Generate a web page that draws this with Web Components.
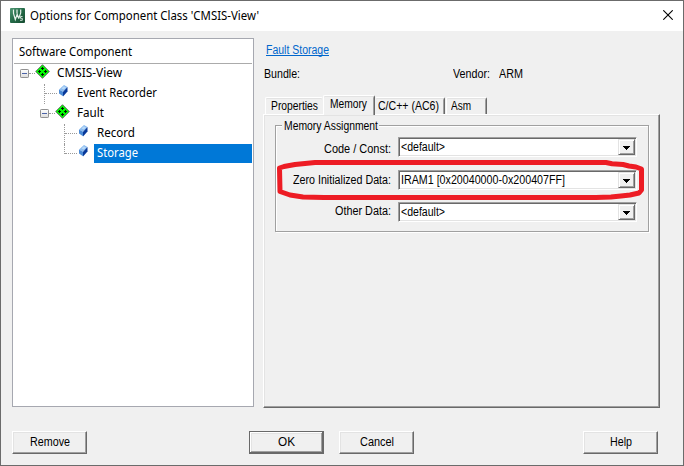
<!DOCTYPE html>
<html lang="en"><head><meta charset="utf-8"><title>Options for Component Class</title>
<style>html,body{margin:0;width:684px;height:466px;overflow:hidden;background:#f0f0f0}</style></head>
<body><options-dialog></options-dialog>
<script>
const define = (name, html, ready) => customElements.define(name, class extends HTMLElement {
  constructor() { super(); this.attachShadow({mode:'open'}).innerHTML = html; }
  connectedCallback() { if (ready) ready.call(this, this.shadowRoot); }
});

// Label condensed or widened to the width given in "w".
define('fit-text', `<style>:host{display:block;white-space:nowrap;flex:none}span{display:inline-block;transform-origin:0 0}</style><span><slot></slot></span>`, function(r) {
  const w = +this.getAttribute('w'), s = r.querySelector('span');
  this.style.width = w + 'px';
  const n = s.getBoundingClientRect().width;
  if (n) s.style.transform = `scaleX(${w / n})`;
});

define('push-button', `<style>
:host{display:flex;box-sizing:border-box;width:75px;height:23px;justify-content:center;padding-top:3px;border:1px solid;border-color:#fff #696969 #696969 #fff;box-shadow:inset -1px -1px #a0a0a0,inset 1px 1px #e3e3e3}
:host([primary]){border-color:#696969;box-shadow:inset -1px -1px #696969,inset 1px 1px #fff,inset -2px -2px #a0a0a0,inset 2px 2px #e3e3e3}
</style><slot></slot>`);

define('combo-box', `<style>
:host{display:flex;box-sizing:border-box;width:239px;height:20px;background:#fff;border:1px solid;border-color:#a0a0a0 #fff #fff #a0a0a0;box-shadow:inset 1px 1px #696969,inset -1px -1px #e3e3e3;padding:1px;justify-content:space-between}
.t{padding:1px 0 0 1px}
.b{box-sizing:border-box;width:17px;height:16px;background:#f0f0f0;border:1px solid;border-color:#e3e3e3 #696969 #696969 #e3e3e3;box-shadow:inset 1px 1px #fff,inset -1px -1px #a0a0a0}
svg{display:block}
</style><div class="t"><slot></slot></div><div class="b"><svg width="15" height="14" shape-rendering="crispEdges"><path d="M4 6h7v1h-1v1h-1v1h-1v1h-1v-1h-1v-1h-1v-1h-1z"/></svg></div>`);

define('tab-item', `<style>
:host{display:block;box-sizing:border-box;height:17px;border-top:1px solid #fff;border-left:1px solid #fff;border-right:1px solid #696969;border-radius:2px 2px 0 0;box-shadow:inset 0 1px #e3e3e3,inset -1px 0 #a0a0a0;padding:1px 0 0 4px}
:host([plain]){border-right-color:#f0f0f0;box-shadow:inset 0 1px #e3e3e3}
:host([active]){height:20px;margin-bottom:-1px;background:#f0f0f0;padding:1px 0 0 6px;position:relative}
</style><slot></slot>`);

define('tree-icon', `<style>:host{display:block;flex:none}svg{display:block}</style><div></div>`, function(r) {
  const svg = {
    diamond: `<svg width="15" height="15"><path d="M7.5 .7 14.3 7.5 7.5 14.3.7 7.5z" fill="#0f0" stroke="#6a6a6a" stroke-width="1"/><g fill="#001c00" shape-rendering="crispEdges"><path d="M7 3h1v1h1v1h-1v1h-1v-1h-1v-1h1zM4 6h1v1h1v1h-1v1h-1v-1h-1v-1h1zM10 6h1v1h1v1h-1v1h-1v-1h-1v-1h1zM7 9h1v1h1v1h-1v1h-1v-1h-1v-1h1z"/></g></svg>`,
    cube: `<svg width="9" height="12"><path d="M5 0 8.5 2 4 6.8 0 4.5z" fill="#8cbcf0"/><path d="M0 4.5 4 6.8V11.3L0 8.5z" fill="#4b8bd6"/><path d="M8.5 2V6.5L4 11.5V6.8z" fill="#07399a"/><path d="M4.8 1.2 7 2.4 5 4.6 2.5 3.5z" fill="#b9daf8"/></svg>`,
    minus: `<svg width="9" height="9"><defs><linearGradient id="g" x2="0" y2="1"><stop stop-color="#fff"/><stop offset="1" stop-color="#dcdcdc"/></linearGradient></defs><rect x=".5" y=".5" width="8" height="8" rx=".7" fill="url(#g)" stroke="#919191"/><path d="M2 4.5h5" stroke="#4b63a7"/></svg>`
  };
  r.querySelector('div').innerHTML = svg[this.getAttribute('kind')];
});

define('component-tree', `<style>
:host{display:block;box-sizing:border-box;width:242px;height:369px;background:#fff;border:1px solid #a6a8b0;padding:0 1px;font:12px/16px "Noto Sans","Open Sans",sans-serif;color:#000}
.head{height:24px;border-bottom:1px solid #ababab;padding-left:5px}
.head fit-text{padding-top:5px}
.row{display:grid;height:20px;align-items:start;justify-content:start}
.top{grid-template-columns:9px 6px 15px 200px}
.h{height:0;margin-top:9px;border-top:1px dotted #9a9a9a}
.row fit-text{padding-top:1px}
.leaf{grid-template-columns:13px 10px 210px}
.v{height:100%;border-left:1px dotted #9a9a9a}
.half{height:10px}
.sel{background:#0078d7;color:#fff;height:19px;padding-left:3px}
</style>
<div class="head"><fit-text w="113">Software Component</fit-text></div>
<div class="row top" style="padding-left:6px"><tree-icon kind="minus" style="margin-top:5px"></tree-icon><div class="h"></div><tree-icon kind="diamond"></tree-icon><fit-text w="65" style="margin-left:7px">CMSIS-View</fit-text></div>
<div class="row leaf" style="padding-left:30px"><div class="v"><div class="h"></div></div><tree-icon kind="cube" style="margin:1px 0 0 2px"></tree-icon><fit-text w="80" style="margin-left:10px">Event Recorder</fit-text></div>
<div class="row top" style="padding-left:26px"><tree-icon kind="minus" style="margin-top:5px"></tree-icon><div class="h"></div><tree-icon kind="diamond"></tree-icon><fit-text w="27" style="margin-left:7px">Fault</fit-text></div>
<div class="row leaf" style="padding-left:50px"><div class="v"><div class="h"></div></div><tree-icon kind="cube" style="margin:1px 0 0 2px"></tree-icon><fit-text w="38" style="margin-left:10px">Record</fit-text></div>
<div class="row leaf" style="padding-left:50px;grid-template-columns:13px 10px 165px"><div class="v half"><div class="h"></div></div><tree-icon kind="cube" style="margin:1px 0 0 2px"></tree-icon><div class="sel" style="margin-left:7px;width:155px"><fit-text w="41">Storage</fit-text></div></div>`);

define('group-box', `<style>
:host{display:block}
.frame{border:1px solid #a0a0a0;box-sizing:border-box;width:374px;height:107px;box-shadow:inset 1px 1px #fff,1px 1px #fff}
.cap{background:#f0f0f0;width:97px;box-sizing:border-box;height:14px;margin:-7px 0 0 6px;padding-left:2px}
.body{padding-top:4px}
</style><div class="frame"><div class="cap"><fit-text w="94">Memory Assignment</fit-text></div><div class="body"><slot></slot></div></div>`);

define('red-outline', `<style>:host{position:absolute;left:276px;top:158px;pointer-events:none}svg{display:block}</style>
<svg width="372" height="46" viewBox="276 158 372 46"><path d="M279.5 168 284 166.5 295 164.5 315 162.5H606L612 163.7 623 164.5 629 166 636 167 641.5 169V190L639 193 630 195 621 196 611 197 596 197.5H324L303 197 290 195 280 191.5Z" fill="none" stroke="#ed1c24" stroke-width="5" stroke-linejoin="round"/></svg>`);

define('options-dialog', `<style>
:host{display:block;box-sizing:border-box;width:684px;height:466px;border:1px solid #6b6b6b;background:#f0f0f0;font:12px/14px "Liberation Sans",Arial,sans-serif;color:#000}
header{display:flex;height:30px;background:#fff}
header fit-text{font:12px/16px "Noto Sans","Open Sans",sans-serif;margin:7px 0 0 5px}
.logo{margin:7px 0 0 9px}.x{margin:9px 10px 0 auto}
svg{display:block}
main{display:flex;padding:7px 0 0 11px;height:369px}
.right{width:398px;margin-left:9px}
.link{margin:5px 0 0 3px;color:#0066cc;width:63px;height:12px;border-bottom:1px solid #0066cc}
.info{display:flex;height:14px;margin:11px 0 0 1px}
.tabs{display:flex;align-items:flex-end;height:19px;margin:14px 0 0 2px}
.page{box-sizing:border-box;width:397px;height:294px;border:1px solid;border-color:#fff #696969 #696969 #fff;box-shadow:inset -1px -1px #a0a0a0,inset 1px 1px #e3e3e3;padding:10px 0 0 11px}
.field{display:grid;grid-template-columns:115px 239px;column-gap:7px;height:20px}
.field>fit-text{justify-self:end}
footer{display:flex;padding:24px 0 0 11px}
</style>
<header><svg class="logo" width="15" height="15"><defs><linearGradient id="k" x2="1" y2="1"><stop stop-color="#4f9673"/><stop offset=".5" stop-color="#236a47"/><stop offset="1" stop-color="#164c31"/></linearGradient></defs><rect width="15" height="15" rx="1" fill="url(#k)"/><path d="M3.5 1.5V5.5L5.3 11.5 7.2 6.2 8.7 10.5M7 1.5V5.5M10.7 1.5V5L8.7 10.5" fill="none" stroke="#e8f2ec" stroke-width="1.2"/><path d="M12.5 8.5H10.5V10.3H12.3V12.3H10" fill="none" stroke="#dcebe2" stroke-width=".9"/></svg><fit-text w="229">Options for Component Class 'CMSIS-View'</fit-text><svg class="x" width="10" height="10"><path d="M.3.3 9.7 9.7M9.7.3.3 9.7" stroke="#000" stroke-width="1.1"/></svg></header>
<main><component-tree></component-tree>
<div class="right"><div class="link"><fit-text w="63">Fault Storage</fit-text></div>
<div class="info"><fit-text w="36">Bundle:</fit-text><fit-text w="37" style="margin-left:153px">Vendor:</fit-text><fit-text w="24" style="margin-left:9px">ARM</fit-text></div>
<div class="tabs"><tab-item plain style="width:58px;padding-left:5px"><fit-text w="47">Properties</fit-text></tab-item><tab-item active style="width:52px"><fit-text w="37">Memory</fit-text></tab-item><tab-item style="width:70px;padding-left:2px;border-left-color:#f0f0f0"><fit-text w="61">C/C++ (AC6)</fit-text></tab-item><tab-item style="width:41px;margin-left:1px"><fit-text w="20">Asm</fit-text></tab-item></div>
<div class="page"><group-box>
<div class="field"><fit-text w="67" style="margin-top:5px">Code / Const:</fit-text><combo-box><fit-text w="44">&lt;default&gt;</fit-text></combo-box></div>
<div class="field" style="margin-top:13px"><fit-text w="98" style="margin-top:3px">Zero Initialized Data:</fit-text><combo-box><fit-text w="164">IRAM1 [0x20040000-0x200407FF]</fit-text></combo-box></div>
<div class="field" style="margin-top:12px"><fit-text w="56" style="margin-top:2px">Other Data:</fit-text><combo-box><fit-text w="44">&lt;default&gt;</fit-text></combo-box></div>
</group-box></div></div></main>
<footer><push-button><fit-text w="40">Remove</fit-text></push-button><push-button primary style="margin-left:162px"><fit-text w="17">OK</fit-text></push-button><push-button style="margin-left:15px"><fit-text w="34">Cancel</fit-text></push-button><push-button style="margin-left:169px"><fit-text w="22">Help</fit-text></push-button></footer>
<red-outline></red-outline>`);
</script></body></html>
